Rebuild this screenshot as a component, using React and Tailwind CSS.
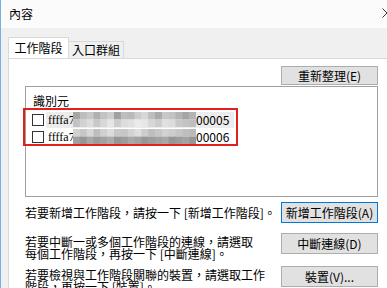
import React from "react"

const font = { fontFamily: '"Noto Sans CJK TC", "Noto Sans", sans-serif' }

// pixelated mosaic that hides the middle of each identifier
const mosaic = [
  [
    [166, 190, 200, 176, 195, 205, 160, 190, 185, 205, 215, 190, 170, 200, 195, 180, 165, 180],
    [195, 210, 220, 200, 215, 230, 205, 220, 225, 235, 230, 215, 205, 225, 220, 200, 195, 190],
  ],
  [
    [210, 198, 215, 190, 208, 220, 200, 198, 210, 222, 205, 190, 198, 210, 205, 198, 190, 185],
    [160, 150, 168, 155, 162, 172, 150, 156, 168, 162, 150, 156, 162, 168, 150, 156, 162, 150],
  ],
]

function Mosaic({ rows }) {
  return (
    <svg width="123" height="15" viewBox="0 0 123 15" className="block shrink-0">
      {rows.map((row, r) =>
        row.map((v, c) => (
          <rect
            key={`${r}-${c}`}
            x={(c * 123) / 18}
            y={r * 7.5}
            width={123 / 18 + 0.5}
            height={7.5}
            fill={`rgb(${v},${v},${v})`}
          />
        ))
      )}
    </svg>
  )
}

function Btn({ children, active }) {
  return (
    <div
      className={`w-[97px] h-[21px] shrink-0 flex items-center justify-center text-[12px] text-black bg-[#e1e1e1] border ${
        active ? "border-[#0078d7]" : "border-[#adadad]"
      }`}
    >
      {children}
    </div>
  )
}

function Row({ id, suffix, shaded }) {
  return (
    <div className="h-[17px] flex items-center pl-[6px]">
      <div className="w-[12px] h-[12px] border border-[#333] bg-white shrink-0" />
      <div className={`ml-[2px] h-[16px] flex items-center pl-[2px] pr-[5px] ${shaded ? "bg-[#ececec]" : ""}`}>
        <span className="text-[12px] leading-[12px] text-black w-[25px]" style={{ fontFamily: '"Liberation Serif", serif' }}>
          {id}
        </span>
        <Mosaic rows={mosaic[shaded ? 0 : 1]} />
        <span className="text-[12px] leading-[12px] text-black">{suffix}</span>
      </div>
    </div>
  )
}

export default function App() {
  return (
    <div className="w-[387px] h-[288px] overflow-hidden bg-[#f0f0f0] border-l border-[#7aaee0] text-black" style={font}>
      {/* title bar */}
      <div className="h-[28px] bg-[#fbfbfb] flex items-center justify-between pl-[8px]">
        <span className="text-[12px]">內容</span>
        <svg width="10" height="10" viewBox="0 0 10 10" className="-mr-[5px] mb-[2px]">
          <path d="M0.5 0.5L9.5 9.5M9.5 0.5L0.5 9.5" stroke="#333" strokeWidth="1" fill="none" />
        </svg>
      </div>

      <div className="pl-[7px] pt-[9px]">
        {/* tabs */}
        <div className="flex items-end h-[21px] relative z-10">
          <div className="w-[61px] h-[21px] bg-white border border-b-0 border-[#d9d9d9] flex items-center justify-center text-[12px]">
            工作階段
          </div>
          <div className="w-[55px] h-[17px] bg-[#f0f0f0] border border-l-0 border-b-0 border-[#d9d9d9] flex items-center justify-center text-[12px]">
            入口群組
          </div>
        </div>

        {/* tab panel */}
        <div className="w-[400px] h-[240px] bg-white border border-[#d9d9d9] pl-[16px] pt-[7px]">
          <div className="w-[353px] flex flex-col">
            <div className="self-end">
              <div className="w-[97px] h-[19px] flex items-center justify-center text-[12px] bg-[#e1e1e1] border border-[#adadad]">
                重新整理(E)
              </div>
            </div>

            {/* identifier list */}
            <div className="relative mt-[1px] h-[111px] border border-[#a0a0a0] bg-white">
              <div className="h-[16px] mt-[6px] pl-[7px] flex items-center text-[12px]">識別元</div>
              <div className="mt-[2px]">
                <Row id="ffffa7" suffix="00005" shaded />
                <Row id="ffffa7" suffix="00006" />
              </div>
              <div className="absolute left-[-3px] top-[21px] w-[215px] h-[38px] border-2 border-[#e0201f]" />
            </div>

            <div className="mt-[5px] flex items-center justify-between">
              <span className="text-[12px] whitespace-nowrap">若要新增工作階段，請按一下 [新增工作階段]。</span>
              <Btn active>新增工作階段(A)</Btn>
            </div>

            <div className="mt-[10px] flex items-start justify-between">
              <span className="mt-[3px] text-[12px] leading-[12px] whitespace-nowrap">
                若要中斷一或多個工作階段的連線，請選取
                <br />
                每個工作階段，再按一下 [中斷連線]。
              </span>
              <Btn>中斷連線(D)</Btn>
            </div>

            <div className="mt-[6px] flex items-start justify-between">
              <span className="mt-[3px] text-[12px] leading-[12px] whitespace-nowrap">
                若要檢視與工作階段關聯的裝置，請選取工作
                <br />
                階段，再按一下 [裝置]。
              </span>
              <Btn>裝置(V)...</Btn>
            </div>
          </div>
        </div>
      </div>
    </div>
  )
}
